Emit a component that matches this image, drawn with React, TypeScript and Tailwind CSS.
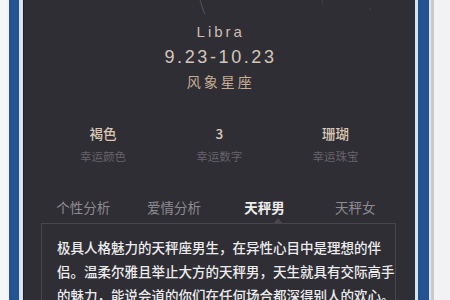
import React from "react";

const cjk = { fontFamily: '"Noto Sans CJK SC", "Noto Sans", sans-serif' };
const latin = { fontFamily: '"Liberation Sans", "Noto Sans CJK SC", sans-serif' };

const stats = [
  { v: "褐色", l: "幸运颜色" },
  { v: "3", l: "幸运数字" },
  { v: "珊瑚", l: "幸运珠宝" },
];

const tabs = ["个性分析", "爱情分析", "天秤男", "天秤女"];

const lines = [
  "极具人格魅力的天秤座男生，在异性心目中是理想的伴",
  "侣。温柔尔雅且举止大方的天秤男，天生就具有交际高手",
  "的魅力，能说会道的你们在任何场合都深得别人的欢心。",
];

export default function App() {
  return (
    <div className="w-[450px] h-[300px] overflow-hidden flex bg-[#f6f7f9]" style={cjk}>
      <div className="w-[9px] bg-[#f4f6f8]" />
      <div className="w-[10px] bg-[#255290]" />
      <div className="w-[4px] bg-[#d6e4f1]" />
      <div className="w-[1px] bg-[#1f1e24]" />
      <div className="relative flex-1 bg-[#2f2e34] flex flex-col">
        <svg className="absolute left-0 top-0" width="404" height="24" viewBox="0 0 404 24" fill="none">
          <path d="M176 0 C178 5 178 9 181 14" stroke="#4d4b53" strokeWidth="1.2" />
          <path d="M298 0 L299 5" stroke="#3f3e45" strokeWidth="1" />
          <circle cx="346" cy="9" r="0.8" fill="#45444b" />
        </svg>
        <div className="pt-[22px] flex flex-col items-center">
          <div className="h-[20px] leading-[20px] text-[15px] tracking-[3px] pl-[3px] text-[#cdbdb3]" style={latin}>
            Libra
          </div>
          <div className="mt-[4px] h-[22px] leading-[22px] text-[18px] tracking-[2.6px] pl-[2.6px] text-[#d3c7bc]" style={latin}>
            9.23-10.23
          </div>
          <div className="mt-[3px] h-[20px] leading-[20px] text-[14px] tracking-[3px] pl-[3px] text-[#c6ad95]">
            风象星座
          </div>
        </div>
        <div className="mt-[32px] px-[21px] grid grid-cols-3">
          {stats.map((s) => (
            <div key={s.l} className="flex flex-col items-center">
              <div className="h-[20px] leading-[20px] text-[13.5px] font-medium text-[#dac8b4]">{s.v}</div>
              <div className="mt-[4px] h-[18px] leading-[18px] text-[11.5px] text-[#67636c]">{s.l}</div>
            </div>
          ))}
        </div>
        <div className="mt-[22px] mx-[16px] h-px bg-[#37363c]" />
        <div className="mt-[10px] px-[14px] grid grid-cols-4">
          {tabs.map((t, i) => (
            <div
              key={t}
              className={
                "text-center h-[20px] leading-[20px] text-[13.5px] " +
                (i === 2 ? "text-[#ececec] font-bold" : "text-[#8e8b93]")
              }
            >
              {t}
            </div>
          ))}
        </div>
        <div className="relative mt-[6px] ml-[17px] mr-[19px] border border-[#48474d] pt-[11px] pl-[15px]">
          <div className="absolute -top-[6px] left-[231px] w-0 h-0 border-l-[5px] border-r-[5px] border-b-[6px] border-l-transparent border-r-transparent border-b-[#48474d]" />
          {lines.map((l) => (
            <div key={l} className="h-[24px] leading-[24px] text-[13.5px] font-medium text-[#ececee] whitespace-nowrap">
              {l}
            </div>
          ))}
        </div>
      </div>
      <div className="w-[3px] bg-[#d6e4f1]" />
      <div className="w-[11px] bg-[#255290]" />
      <div className="w-[2px] bg-[#dfe6ee]" />
      <div className="w-[3px] bg-[#c9c9cf]" />
      <div className="flex-1 bg-[#f2f2f4]" />
    </div>
  );
}
